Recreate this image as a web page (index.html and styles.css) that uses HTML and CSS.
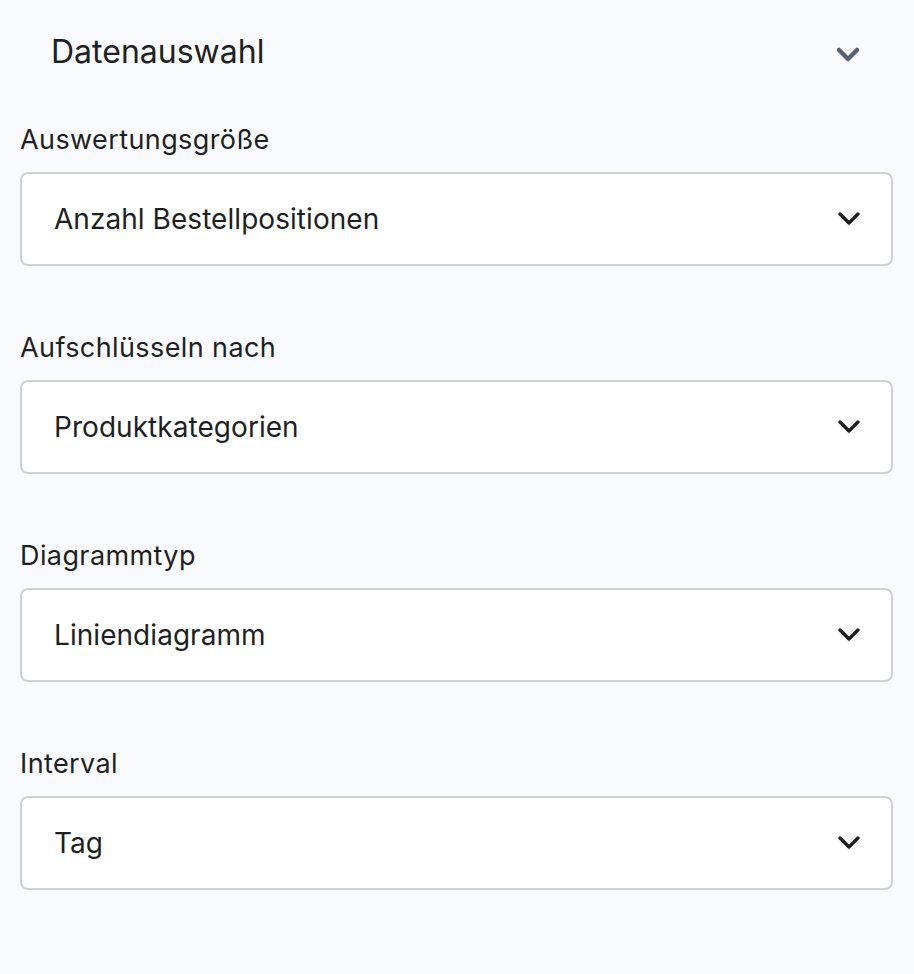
FILE: index.html
```html
<!DOCTYPE html>
<html lang="de">
<head>
    <meta charset="UTF-8">
    <meta name="viewport" content="width=device-width, initial-scale=1.0">
    <title>Datenauswahl</title>
    <link rel="stylesheet" href="styles.css">
</head>
<body>
    <div class="panel">
        <div class="panel-header">
            <h2 class="panel-title">Datenauswahl</h2>
            <svg class="panel-toggle" width="26" height="18" viewBox="0 0 26 18">
                <path d="M4 4 L13 13 L22 4" fill="none" stroke="#556172" stroke-width="4.5" stroke-linecap="round" stroke-linejoin="round"/>
            </svg>
        </div>

        <div class="field">
            <label class="field-label" for="metric">Auswertungsgröße</label>
            <div class="select-wrap">
                <select id="metric" class="select">
                    <option>Anzahl Bestellpositionen</option>
                </select>
                <svg class="select-arrow" width="24" height="16" viewBox="0 0 24 16">
                    <path d="M3 3 L12 12 L21 3" fill="none" stroke="#1c1d21" stroke-width="3.4" stroke-linecap="round" stroke-linejoin="round"/>
                </svg>
            </div>
        </div>

        <div class="field">
            <label class="field-label" for="breakdown">Aufschlüsseln nach</label>
            <div class="select-wrap">
                <select id="breakdown" class="select">
                    <option>Produktkategorien</option>
                </select>
                <svg class="select-arrow" width="24" height="16" viewBox="0 0 24 16">
                    <path d="M3 3 L12 12 L21 3" fill="none" stroke="#1c1d21" stroke-width="3.4" stroke-linecap="round" stroke-linejoin="round"/>
                </svg>
            </div>
        </div>

        <div class="field">
            <label class="field-label" for="chart">Diagrammtyp</label>
            <div class="select-wrap">
                <select id="chart" class="select">
                    <option>Liniendiagramm</option>
                </select>
                <svg class="select-arrow" width="24" height="16" viewBox="0 0 24 16">
                    <path d="M3 3 L12 12 L21 3" fill="none" stroke="#1c1d21" stroke-width="3.4" stroke-linecap="round" stroke-linejoin="round"/>
                </svg>
            </div>
        </div>

        <div class="field">
            <label class="field-label" for="interval">Interval</label>
            <div class="select-wrap">
                <select id="interval" class="select">
                    <option>Tag</option>
                </select>
                <svg class="select-arrow" width="24" height="16" viewBox="0 0 24 16">
                    <path d="M3 3 L12 12 L21 3" fill="none" stroke="#1c1d21" stroke-width="3.4" stroke-linecap="round" stroke-linejoin="round"/>
                </svg>
            </div>
        </div>
    </div>
</body>
</html>
```

FILE: styles.css
```css
body {
    font-family: Inter, "Noto Sans", sans-serif;
    margin: 0;
    padding: 0;
    background-color: #f9fafe;
    color: #1e1f23;
}
.panel {
    padding: 0 21px 0 20px;
}
.panel-header {
    display: flex;
    align-items: center;
    justify-content: space-between;
    height: 104px;
    padding: 0 32px 0 31px;
    margin-bottom: 18px;
}
.panel-title {
    font-size: 32px;
    font-weight: 400;
    line-height: 40px;
    margin: 0;
}
.panel-toggle {
    display: block;
    margin-top: 6px;
}

/* Form fields */
.field {
    margin-bottom: 64px;
}
.field-label {
    display: block;
    font-size: 27px;
    line-height: 36px;
    letter-spacing: 0.4px;
    margin-bottom: 14px;
}
.select-wrap {
    position: relative;
}
.select {
    display: block;
    width: 100%;
    height: 94px;
    box-sizing: border-box;
    appearance: none;
    -webkit-appearance: none;
    background: #fff;
    border: 2px solid #d0d1d6;
    border-radius: 8px;
    padding: 0 70px 0 32px;
    font-family: inherit;
    font-size: 28px;
    letter-spacing: 0.05px;
    color: #1e1f23;
    outline: none;
}
.select-arrow {
    position: absolute;
    right: 32px;
    top: 50%;
    margin-top: -8px;
    pointer-events: none;
}
```
